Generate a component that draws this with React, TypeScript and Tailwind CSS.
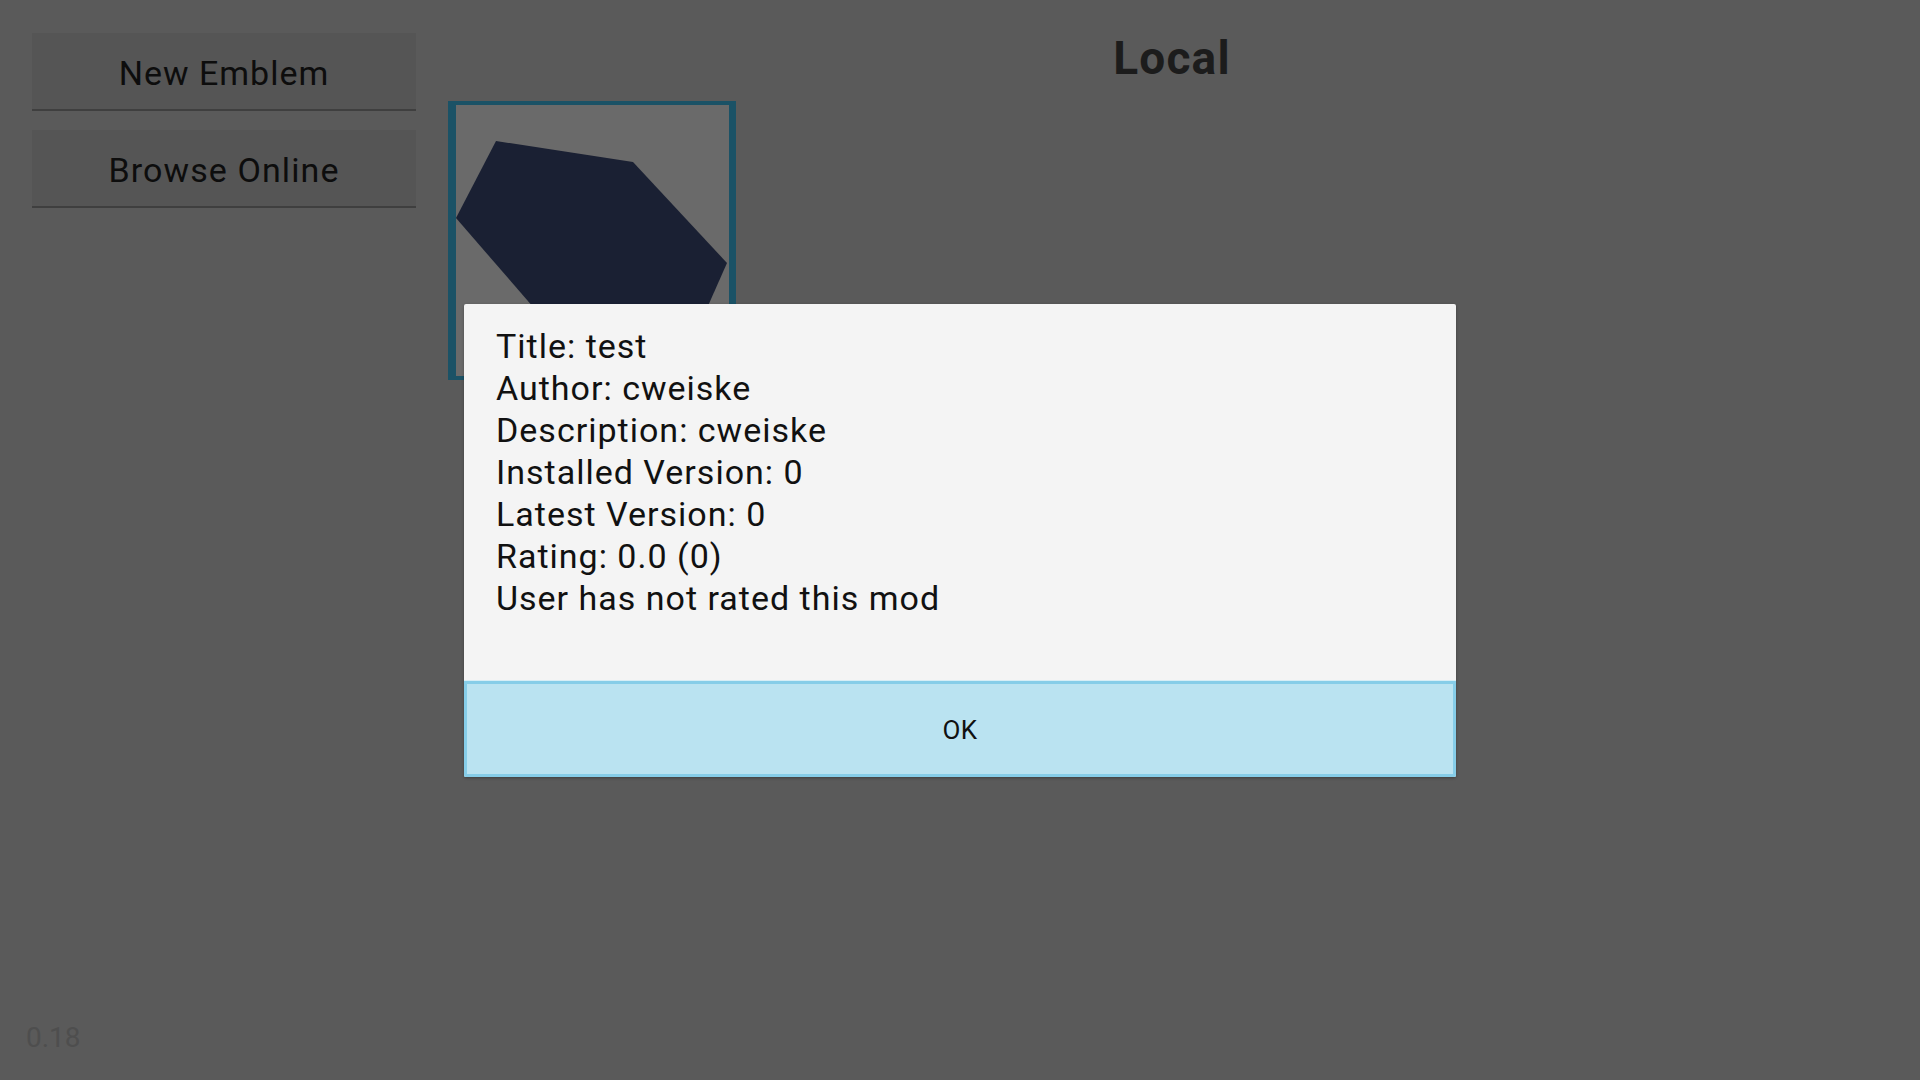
import React from "react";

const lines = [
  "Title: test",
  "Author: cweiske",
  "Description: cweiske",
  "Installed Version: 0",
  "Latest Version: 0",
  "Rating: 0.0 (0)",
  "User has not rated this mod",
];

export default function App() {
  return (
    <div
      className="relative flex w-[1920px] h-[1080px] overflow-hidden bg-[#5a5a5a]"
      style={{ fontFamily: "Roboto, 'Noto Sans', sans-serif" }}
    >
      {/* Left column */}
      <div className="flex flex-col w-[424px] h-full pl-[32px] pt-[33px]">
        <div className="flex flex-col gap-[19px] w-[384px]">
          <button className="h-[78px] w-full pt-[4px] bg-[#555555] border-b-[2px] border-[#3f3f3f] text-[34px] tracking-[1px] text-[#0d0d0d] flex items-center justify-center">
            New Emblem
          </button>
          <button className="h-[78px] w-full pt-[4px] bg-[#555555] border-b-[2px] border-[#3f3f3f] text-[34px] tracking-[1.1px] text-[#0d0d0d] flex items-center justify-center">
            Browse Online
          </button>
        </div>
        <div className="mt-auto -ml-[6px] pb-[25px] text-[28px] leading-[34px] text-[#4e4e4e]">
          0.18
        </div>
      </div>

      {/* Main area */}
      <div className="flex-1 flex flex-col pt-[31px] pl-[24px]">
        <div className="-ml-[24px] text-center text-[46px] leading-[54px] font-bold tracking-[1.2px] text-[#1c1c1c]">
          Local
        </div>
        <div className="mt-[16px] w-[288px] h-[279px] border-solid border-l-[8px] border-r-[7px] border-t-[4px] border-b-[4px] border-[#1b5266] bg-[#6a6a6a]">
          <svg width="273" height="271" viewBox="0 0 273 271" className="block">
            <polygon
              points="40,36 177,57 271,158 240,228 110,240 0,113"
              fill="#1a2033"
            />
          </svg>
        </div>
      </div>

      {/* Dialog */}
      <div className="absolute inset-0 flex items-center justify-center">
        <div className="w-[992px] bg-[#f4f4f4] rounded-[2px] shadow-[0_1px_3px_rgba(0,0,0,0.3)] flex flex-col overflow-hidden">
          <div className="pt-[21px] pl-[32px] pb-[61px] text-[34px] leading-[42px] tracking-[1px] text-[#111111]">
            {lines.map((l) => (
              <div key={l}>{l}</div>
            ))}
          </div>
          <div className="border-t border-[#d6eef6]">
            <button className="w-full h-[96px] pt-[4px] bg-[#bae3f1] border-[3px] border-[#86cde8] text-[26px] tracking-[0.5px] text-[#111111] flex items-center justify-center">
              OK
            </button>
          </div>
        </div>
      </div>
    </div>
  );
}
